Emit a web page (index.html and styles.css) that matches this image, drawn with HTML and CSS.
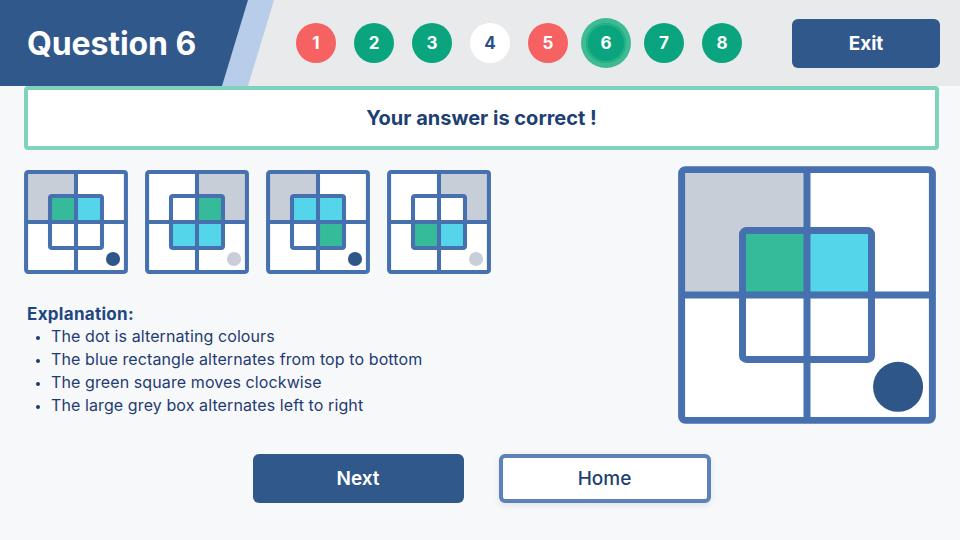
FILE: index.html
```html
<!DOCTYPE html>
<html>
<head>
<meta charset="utf-8">
<link rel="stylesheet" href="styles.css">
</head>
<body>
<header class="topbar">
  <div class="brand">
    <div class="brand-inner"><h1 class="title">Question 6</h1></div>
  </div>
  <nav class="steps">
    <span class="step wrong">1</span>
    <span class="step right">2</span>
    <span class="step right">3</span>
    <span class="step open">4</span>
    <span class="step wrong">5</span>
    <span class="step right current">6</span>
    <span class="step right">7</span>
    <span class="step right">8</span>
  </nav>
  <button class="btn exit">Exit</button>
</header>

<main class="content">
  <div class="feedback">Your answer is correct !</div>

  <section class="work">
    <div class="left">
      <div class="minis">
        <svg class="grid mini" viewBox="0 0 100 100">
          <rect class="cell" x="2" y="2" width="96" height="96"/>
          <rect class="grey" x="2" y="2" width="48" height="48"/>
          <rect class="green" x="25" y="25" width="25" height="25"/>
          <rect class="cyan" x="50" y="25" width="25" height="25"/>
          <rect class="cell" x="25" y="50" width="25" height="25"/>
          <rect class="cell" x="50" y="50" width="25" height="25"/>
          <rect class="ln" x="2" y="2" width="96" height="96" rx="2"/>
          <path class="ln" d="M50 2V98M2 50H98"/>
          <rect class="ln" x="25" y="25" width="50" height="50" rx="2"/>
          <circle class="dot-dark" cx="85.6" cy="85.6" r="6.8"/>
        </svg>
        <svg class="grid mini" viewBox="0 0 100 100">
          <rect class="cell" x="2" y="2" width="96" height="96"/>
          <rect class="grey" x="50" y="2" width="48" height="48"/>
          <rect class="cell" x="25" y="25" width="25" height="25"/>
          <rect class="green" x="50" y="25" width="25" height="25"/>
          <rect class="cyan" x="25" y="50" width="25" height="25"/>
          <rect class="cyan" x="50" y="50" width="25" height="25"/>
          <rect class="ln" x="2" y="2" width="96" height="96" rx="2"/>
          <path class="ln" d="M50 2V98M2 50H98"/>
          <rect class="ln" x="25" y="25" width="50" height="50" rx="2"/>
          <circle class="dot-light" cx="85.6" cy="85.6" r="6.8"/>
        </svg>
        <svg class="grid mini" viewBox="0 0 100 100">
          <rect class="cell" x="2" y="2" width="96" height="96"/>
          <rect class="grey" x="2" y="2" width="48" height="48"/>
          <rect class="cyan" x="25" y="25" width="25" height="25"/>
          <rect class="cyan" x="50" y="25" width="25" height="25"/>
          <rect class="cell" x="25" y="50" width="25" height="25"/>
          <rect class="green" x="50" y="50" width="25" height="25"/>
          <rect class="ln" x="2" y="2" width="96" height="96" rx="2"/>
          <path class="ln" d="M50 2V98M2 50H98"/>
          <rect class="ln" x="25" y="25" width="50" height="50" rx="2"/>
          <circle class="dot-dark" cx="85.6" cy="85.6" r="6.8"/>
        </svg>
        <svg class="grid mini" viewBox="0 0 100 100">
          <rect class="cell" x="2" y="2" width="96" height="96"/>
          <rect class="grey" x="50" y="2" width="48" height="48"/>
          <rect class="cell" x="25" y="25" width="25" height="25"/>
          <rect class="cell" x="50" y="25" width="25" height="25"/>
          <rect class="green" x="25" y="50" width="25" height="25"/>
          <rect class="cyan" x="50" y="50" width="25" height="25"/>
          <rect class="ln" x="2" y="2" width="96" height="96" rx="2"/>
          <path class="ln" d="M50 2V98M2 50H98"/>
          <rect class="ln" x="25" y="25" width="50" height="50" rx="2"/>
          <circle class="dot-light" cx="85.6" cy="85.6" r="6.8"/>
        </svg>
      </div>

      <div class="explain">
        <h2 class="explain-title">Explanation:</h2>
        <ul class="explain-list">
          <li>The dot is alternating colours</li>
          <li>The blue rectangle alternates from top to bottom</li>
          <li>The green square moves clockwise</li>
          <li>The large grey box alternates left to right</li>
        </ul>
      </div>
    </div>

    <svg class="grid big" viewBox="0 0 100 100">
      <rect class="cell" x="1.4" y="1.4" width="97.2" height="97.2"/>
      <rect class="grey" x="1.4" y="1.4" width="48.6" height="48.6"/>
      <rect class="green" x="25" y="25" width="25" height="25"/>
      <rect class="cyan" x="50" y="25" width="25" height="25"/>
      <rect class="cell" x="25" y="50" width="25" height="25"/>
      <rect class="cell" x="50" y="50" width="25" height="25"/>
      <rect class="ln" x="1.4" y="1.4" width="97.2" height="97.2" rx="1.5"/>
      <path class="ln" d="M50 1.4V98.6M1.4 50H98.6"/>
      <rect class="ln" x="25" y="25" width="50" height="50" rx="1.5"/>
      <circle class="dot-dark" cx="85.3" cy="85.6" r="9.7"/>
    </svg>
  </section>

  <div class="actions">
    <button class="btn next">Next</button>
    <button class="btn home">Home</button>
  </div>
</main>
</body>
</html>
```

FILE: styles.css
```css
* { box-sizing: border-box; }

html, body {
  margin: 0;
  padding: 0;
  width: 960px;
  height: 540px;
  overflow: hidden;
  background: #f7f8f9;
  font-family: Inter, "Noto Sans", sans-serif;
}

.topbar {
  height: 86px;
  background: #e9eaec;
  display: flex;
  align-items: center;
}

.brand {
  width: 274px;
  height: 86px;
  background: #b8cde9;
  clip-path: polygon(0 0, 274px 0, 248px 100%, 0 100%);
}

.brand-inner {
  height: 86px;
  background: #31588b;
  clip-path: polygon(0 0, 248px 0, 222px 100%, 0 100%);
  display: flex;
  align-items: center;
  padding-left: 27px;
}

.title {
  margin: 0;
  color: #ffffff;
  font-size: 32px;
  font-weight: 700;
  letter-spacing: -0.1px;
}

.steps {
  display: flex;
  gap: 18px;
  margin-left: 22px;
}

.step {
  width: 40px;
  height: 40px;
  border-radius: 50%;
  display: flex;
  align-items: center;
  justify-content: center;
  color: #ffffff;
  font-size: 17px;
  font-weight: 700;
}

.step.wrong { background: #f66262; }
.step.right { background: #0aa57e; }
.step.open { background: #ffffff; color: #29508a; }
.step.current {
  box-shadow: inset 0 0 0 2px #26b187, 0 0 0 5px #3fbb93;
}

.btn {
  font-family: Inter, "Noto Sans", sans-serif;
  border: none;
  cursor: pointer;
  border-radius: 6px;
}

.exit {
  margin-left: auto;
  margin-right: 20px;
  width: 148px;
  height: 49px;
  background: #31588b;
  color: #ffffff;
  font-size: 19px;
  font-weight: 700;
}

.content {
  padding: 0 21px 0 24px;
}

.feedback {
  height: 64px;
  border: 4px solid #7fd3bd;
  border-radius: 4px;
  background: #ffffff;
  display: flex;
  align-items: center;
  justify-content: center;
  color: #1d3f73;
  font-size: 20px;
  font-weight: 700;
}

.work {
  display: flex;
  justify-content: space-between;
  margin-top: 16px;
}

.left {
  padding-top: 4px;
}

.minis {
  display: flex;
  gap: 17px;
}

.grid.mini {
  width: 104px;
  height: 104px;
  display: block;
}

.grid.big {
  width: 260px;
  height: 258px;
  margin-right: 2px;
  display: block;
}

.cell { fill: #ffffff; }
.grey { fill: #c7ced8; }
.green { fill: #35bb9a; }
.cyan { fill: #55d5ea; }
.dot-dark { fill: #2f5689; }
.dot-light { fill: #c9ced8; }

.ln {
  fill: none;
  stroke: #4670ae;
  stroke-linejoin: round;
}

.mini .ln { stroke-width: 3.9; }
.big .ln { stroke-width: 2.7; }

.explain {
  margin-top: 29px;
  padding-left: 3px;
}

.explain-title {
  margin: 0;
  font-size: 17px;
  font-weight: 700;
  color: #1e4683;
  line-height: 22px;
  letter-spacing: 0.3px;
}

.explain-list {
  margin: 0;
  padding-left: 24px;
  color: #1f3b73;
  font-size: 16px;
  line-height: 23px;
  letter-spacing: 0.1px;
}

.explain-list li::marker {
  font-size: 12px;
}

.actions {
  display: flex;
  justify-content: center;
  gap: 35px;
  margin-top: 30px;
}

.next {
  width: 211px;
  height: 49px;
  background: #31588b;
  color: #ffffff;
  font-size: 19px;
  font-weight: 600;
}

.home {
  width: 212px;
  height: 49px;
  background: #ffffff;
  border: 4px solid #5c82b8;
  color: #1d3f73;
  font-size: 19px;
  font-weight: 500;
  box-shadow: 0 2px 6px rgba(40, 70, 120, 0.12);
}
```
